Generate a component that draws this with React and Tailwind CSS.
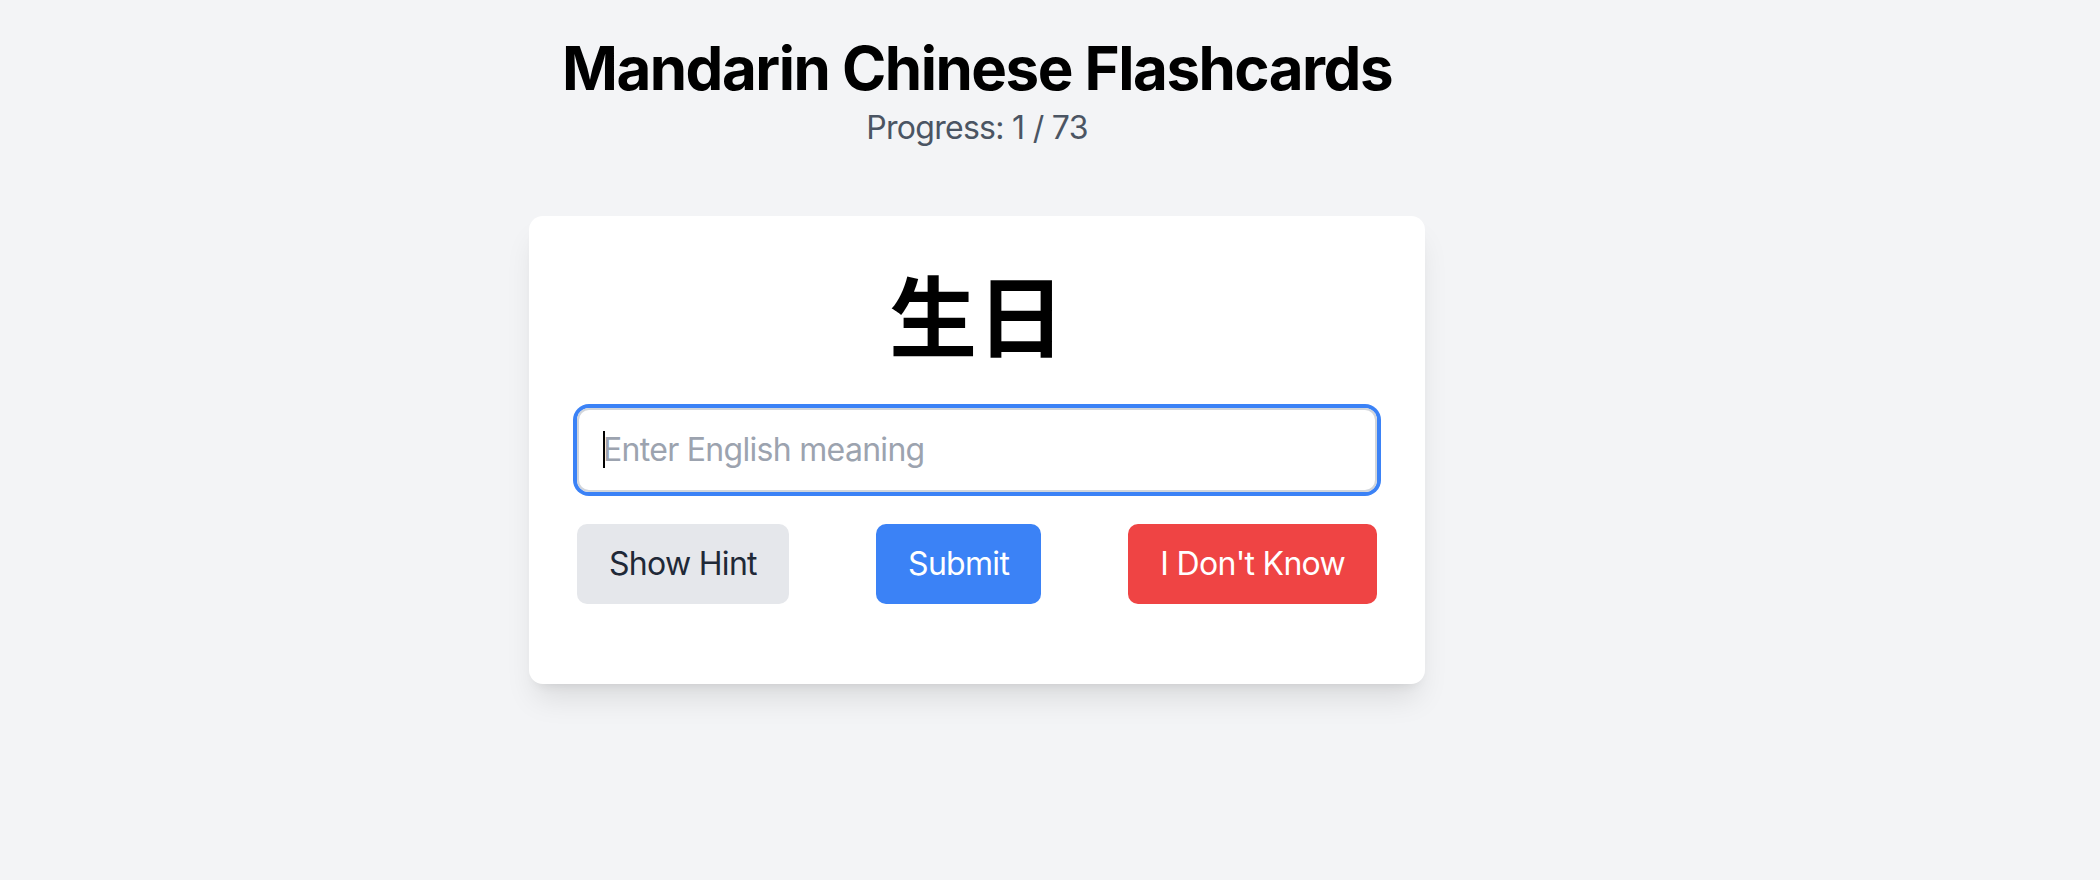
import React, { useState } from "react";

const App = () => {
  const [answer, setAnswer] = useState("");

  return (
    <div className="min-h-screen bg-[#f3f4f6] font-['Inter','Noto_Sans',sans-serif]">
      <div className="w-[1954px] flex flex-col items-center pt-[32px]">
        <h1 className="text-[60px] leading-[72px] font-bold tracking-[-1.5px] text-black">Mandarin Chinese Flashcards</h1>
        <p className="text-[32px] leading-[48px] tracking-[-0.7px] text-[#4b5563] mb-[64px]">Progress: 1 / 73</p>

        {/* Card */}
        <div className="w-[896px] bg-white rounded-[14px] p-[48px] shadow-[0_20px_30px_-6px_rgba(0,0,0,0.1),0_8px_12px_-8px_rgba(0,0,0,0.1)]">
          <div className="text-center text-[88px] leading-[96px] font-bold text-black mb-[48px] font-['Noto_Sans_CJK_SC','Noto_Sans_CJK_JP',sans-serif]">
            生日
          </div>

          <div className="relative mb-[32px]">
            <input
              autoFocus
              value={answer}
              onChange={(e) => setAnswer(e.target.value)}
              placeholder="Enter English meaning"
              className="w-full px-[24px] py-[16px] text-[32px] leading-[48px] tracking-[-0.7px] border-2 border-[#d1d5db] rounded-[12px] outline-none ring-4 ring-[#3b82f6] placeholder:text-[#9ca3af] text-[#111827] caret-black"
            />
            {/* caret */}
            {answer === "" && (
              <span className="absolute left-[26px] top-[23px] w-[2px] h-[37px] bg-black pointer-events-none"></span>
            )}
          </div>

          <div className="flex justify-between tracking-[-0.7px]">
            <button className="px-[32px] py-[16px] text-[32px] leading-[48px] rounded-[10px] bg-[#e5e7eb] text-[#1f2937]">
              Show Hint
            </button>
            <button className="px-[32px] py-[16px] text-[32px] leading-[48px] rounded-[10px] bg-[#3b82f6] text-white">
              Submit
            </button>
            <button className="px-[32px] py-[16px] text-[32px] leading-[48px] rounded-[10px] bg-[#ef4444] text-white">
              I Don't Know
            </button>
          </div>

          <div className="mt-[32px]"></div>
        </div>
      </div>
    </div>
  );
};

export default App;
